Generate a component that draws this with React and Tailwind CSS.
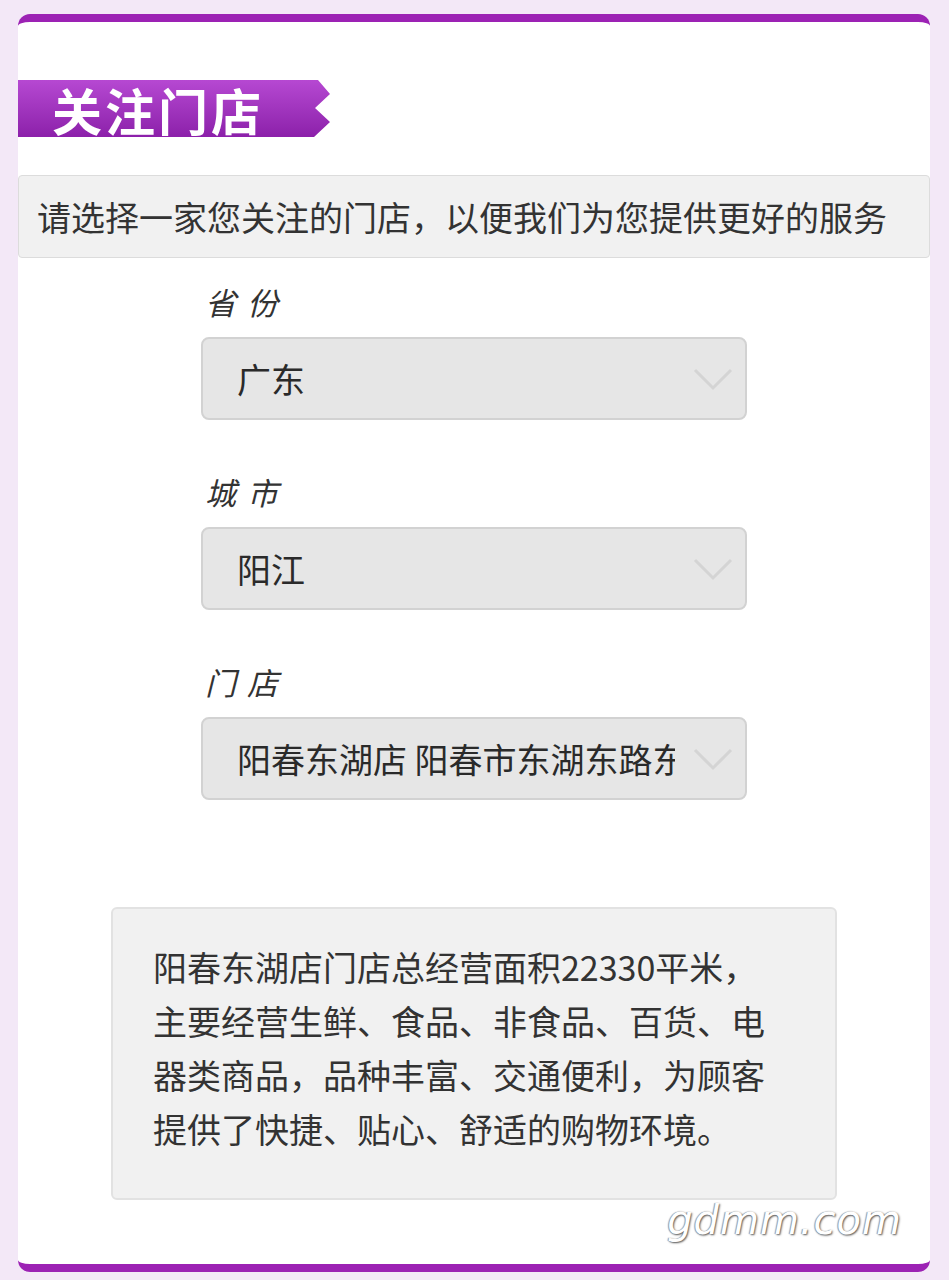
import React from 'react';

const cjk = { fontFamily: '"Noto Sans CJK SC", "Noto Sans", sans-serif' };

function Chevron() {
  return (
    <svg className="absolute right-[12px] top-[28px]" width="40" height="26" viewBox="0 0 40 26">
      <path d="M2 3 L20 21 L38 3" fill="none" stroke="#d4d4d4" strokeWidth="3" />
    </svg>
  );
}

function Field({ label, value }) {
  return (
    <div className="ml-[183px]">
      <div className="pl-[4px] text-[31px] italic leading-[40px] tracking-[2px] text-[#333]">{label}</div>
      <div className="relative mt-[15px] flex h-[83px] w-[546px] items-center rounded-[8px] border-2 border-[#d2d2d2] bg-[#e6e6e6] pl-[34px]">
        <span className="block w-[438px] overflow-hidden whitespace-nowrap text-[34px] leading-[52px] text-[#2a2a2a]">{value}</span>
        <Chevron />
      </div>
    </div>
  );
}

export default function App() {
  return (
    <div className="min-h-[1280px] bg-[#f3e8f7] pl-[18px] pr-[19px] pt-[14px]" style={cjk}>
      <div className="relative h-[1258px] overflow-hidden rounded-[12px] border-y-[8px] border-[#9c22b4] bg-white">
        {/* title banner */}
        <div className="mt-[58px] flex h-[57px] w-[314px] items-center bg-gradient-to-b from-[#b648d2] to-[#8c20aa] pl-[34px] [clip-path:polygon(0_0,300px_0,312px_14px,297px_28px,312px_42px,296px_57px,0_57px)]">
          <span className="text-[50px] font-bold leading-none tracking-[3px] text-white">关注门店</span>
        </div>

        <div className="mt-[38px] flex h-[83px] items-center rounded-[4px] border border-[#dcdcdc] bg-[#f1f1f1] pl-[18px]">
          <span className="text-[34px] leading-[40px] text-[#333]">请选择一家您关注的门店，以便我们为您提供更好的服务</span>
        </div>

        <div className="mt-[24px] flex flex-col gap-[52px]">
          <Field label="省 份" value="广东" />
          <Field label="城 市" value="阳江" />
          <Field label="门 店" value="阳春东湖店 阳春市东湖东路东湖商业城" />
        </div>

        <div className="ml-[93px] mt-[107px] h-[293px] w-[726px] rounded-[6px] border-2 border-[#e2e2e2] bg-[#f1f1f1] pl-[40px] pt-[31px]">
          <p className="text-[34px] leading-[54px] text-[#333]">
            阳春东湖店门店总经营面积22330平米，<br />
            主要经营生鲜、食品、非食品、百货、电<br />
            器类商品，品种丰富、交通便利，为顾客<br />
            提供了快捷、贴心、舒适的购物环境。
          </p>
        </div>

        <div
          className="absolute right-[28px] bottom-[24px] text-[40px] font-light italic leading-none tracking-[1px] text-white [text-shadow:1px_1px_2px_#555,-1px_0_1px_#999]"
          style={{ fontFamily: '"DejaVu Sans", sans-serif' }}
        >
          gdmm.com
        </div>
      </div>
    </div>
  );
}
